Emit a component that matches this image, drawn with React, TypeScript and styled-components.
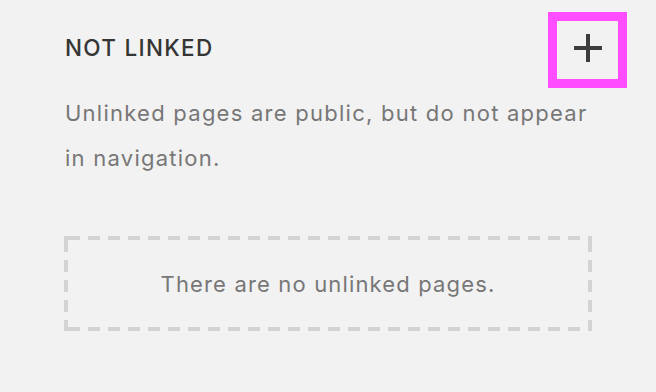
import { createGlobalStyle } from "styled-components";
import styled from "styled-components";

const Global = createGlobalStyle`
    html, body { margin: 0; padding: 0; background: #f2f2f2; }
    body { font-family: Inter, "Liberation Sans", sans-serif; -webkit-font-smoothing: antialiased; }
`;

const Panel = styled.section`
    width: 656px;
    height: 392px;
    box-sizing: border-box;
    padding: 12px 64px 0 64px;
    background: #f2f2f2;
`;

const Header = styled.div`
    display: flex;
    align-items: center;
    justify-content: space-between;
    height: 76px;
`;

const Title = styled.h2`
    margin: 0 0 5px 1px;
    font-size: 22.5px;
    font-weight: 500;
    letter-spacing: 1.3px;
    color: #353535;
`;

const AddButton = styled.button`
    width: 79px;
    height: 76px;
    box-sizing: border-box;
    margin-right: -35px;
    padding: 0 0 4px 0;
    border: 9px solid #ff4dff;
    background: transparent;
    display: flex;
    align-items: center;
    justify-content: center;
    cursor: pointer;
`;

const Desc = styled.p`
    margin: 3px 0 0 1px;
    font-size: 22px;
    letter-spacing: 1.25px;
    line-height: 45px;
    color: #777;
`;

const dash = "#d3d3d3";

const Empty = styled.div`
    margin-top: 55px;
    height: 95px;
    display: flex;
    align-items: center;
    justify-content: center;
    font-size: 22px;
    letter-spacing: 1.15px;
    color: #777;
    background-image:
        linear-gradient(to right, ${dash} 12px, transparent 12px),
        linear-gradient(to right, ${dash} 12px, transparent 12px),
        linear-gradient(to bottom, ${dash} 12px, transparent 12px),
        linear-gradient(to bottom, ${dash} 12px, transparent 12px),
        linear-gradient(${dash}, ${dash}),
        linear-gradient(${dash}, ${dash}),
        linear-gradient(${dash}, ${dash}),
        linear-gradient(${dash}, ${dash});
    background-size: 20px 4px, 20px 4px, 4px 20px, 4px 20px, 4px 4px, 4px 4px, 4px 4px, 4px 4px;
    background-position: 4px 0, 4px 100%, 0 4px, 100% 4px, 0 0, 100% 0, 0 100%, 100% 100%;
    background-repeat: repeat-x, repeat-x, repeat-y, repeat-y, no-repeat, no-repeat, no-repeat, no-repeat;
`;

function PlusIcon() {
    return (
        <svg width="28" height="28" viewBox="0 0 28 28">
            <path d="M14 0v28M0 14h28" stroke="#3d3d3d" strokeWidth="4" />
        </svg>
    );
}

export default function App() {
    return (
        <>
            <Global />
            <Panel>
                <Header>
                    <Title>NOT LINKED</Title>
                    <AddButton aria-label="Add page"><PlusIcon /></AddButton>
                </Header>
                <Desc>Unlinked pages are public, but do not appear in navigation.</Desc>
                <Empty>There are no unlinked pages.</Empty>
            </Panel>
        </>
    );
}
